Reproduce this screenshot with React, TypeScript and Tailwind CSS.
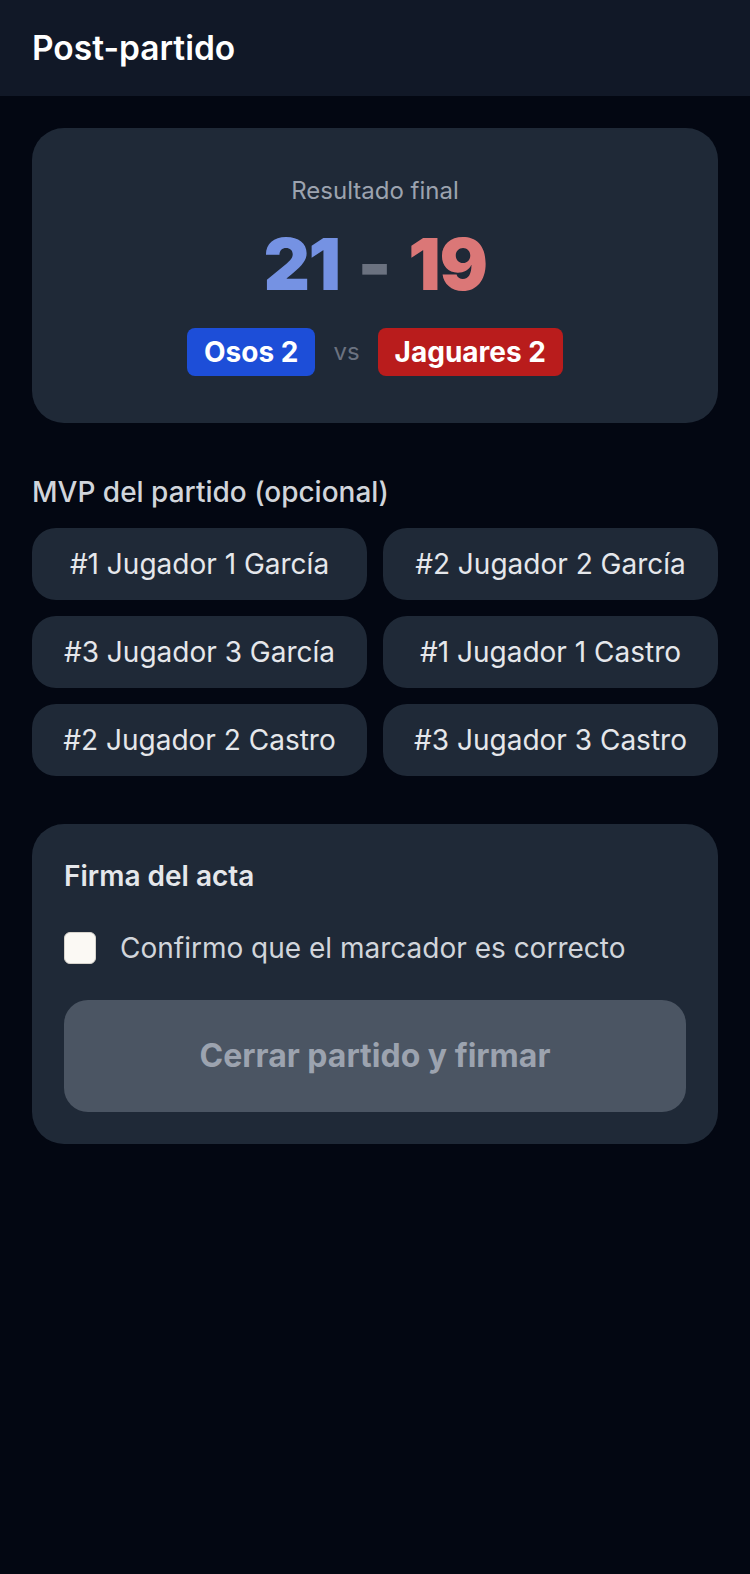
import { useState } from "react";

const players = [
  "#1 Jugador 1 García",
  "#2 Jugador 2 García",
  "#3 Jugador 3 García",
  "#1 Jugador 1 Castro",
  "#2 Jugador 2 Castro",
  "#3 Jugador 3 Castro",
];

export default function App() {
  const [mvp, setMvp] = useState<string | null>(null);
  const [confirmed, setConfirmed] = useState(false);

  return (
    <div className="min-h-[1574px] bg-[#030712] font-['Inter',sans-serif] text-white">
      <header className="flex h-[96px] items-center bg-[#111827] px-8">
        <h1 className="text-[33.5px] font-semibold leading-[40px]">Post-partido</h1>
      </header>

      <main className="flex flex-col px-8 pt-8">
        {/* Marcador */}
        <section className="flex h-[295px] flex-col items-center rounded-[32px] bg-[#1f2937] pt-[47px]">
          <p className="text-[24px] leading-[32px] text-[#9ca3af]">Resultado final</p>
          <div className="mt-[17px] flex items-center gap-[18px] text-[72px] font-black leading-[80px] tracking-[-0.02em]">
            <span className="text-[#7592e3]">21</span>
            <span className="text-[#6b7280]">-</span>
            <span className="text-[#db7777]">19</span>
          </div>
          <div className="mt-[24px] flex items-center gap-[18px]">
            <span className="rounded-lg bg-[#1d4ed8] px-[17px] py-1 text-[28px] font-bold leading-[40px]">Osos 2</span>
            <span className="text-[24px] leading-[32px] text-[#6b7280]">vs</span>
            <span className="rounded-lg bg-[#b91c1c] px-[17px] py-1 text-[28px] font-bold leading-[40px]">Jaguares 2</span>
          </div>
        </section>

        {/* MVP */}
        <h2 className="mt-[49px] text-[28px] font-medium leading-[40px] text-[#d1d5db]">MVP del partido (opcional)</h2>
        <div className="mt-4 grid grid-cols-2 gap-4">
          {players.map((p) => (
            <button
              key={p}
              onClick={() => setMvp(mvp === p ? null : p)}
              className={`h-[72px] rounded-[24px] text-[28px] leading-[40px] text-[#e5e7eb] ${
                mvp === p ? "bg-[#1d4ed8]" : "bg-[#1f2937]"
              }`}
            >
              {p}
            </button>
          ))}
        </div>

        {/* Firma */}
        <section className="mt-[48px] flex flex-col rounded-[32px] bg-[#1f2937] p-8">
          <h2 className="text-[28px] font-semibold leading-[40px] text-[#e5e7eb]">Firma del acta</h2>
          <label className="mt-8 flex cursor-pointer items-center gap-6">
            <input
              type="checkbox"
              checked={confirmed}
              onChange={(e) => setConfirmed(e.target.checked)}
              className="h-8 w-8 appearance-none rounded-[6px] border border-[#d6d3cc] bg-[#fbf9f4] checked:bg-[#2563eb]"
            />
            <span className="text-[28px] leading-[40px] text-[#d1d5db]">Confirmo que el marcador es correcto</span>
          </label>
          <button
            disabled={!confirmed}
            className="mt-8 h-[112px] rounded-[24px] bg-[#4b5563] text-[32px] font-bold text-[#9ca3af] enabled:bg-[#2563eb] enabled:text-white"
          >
            Cerrar partido y firmar
          </button>
        </section>
      </main>
    </div>
  );
}
